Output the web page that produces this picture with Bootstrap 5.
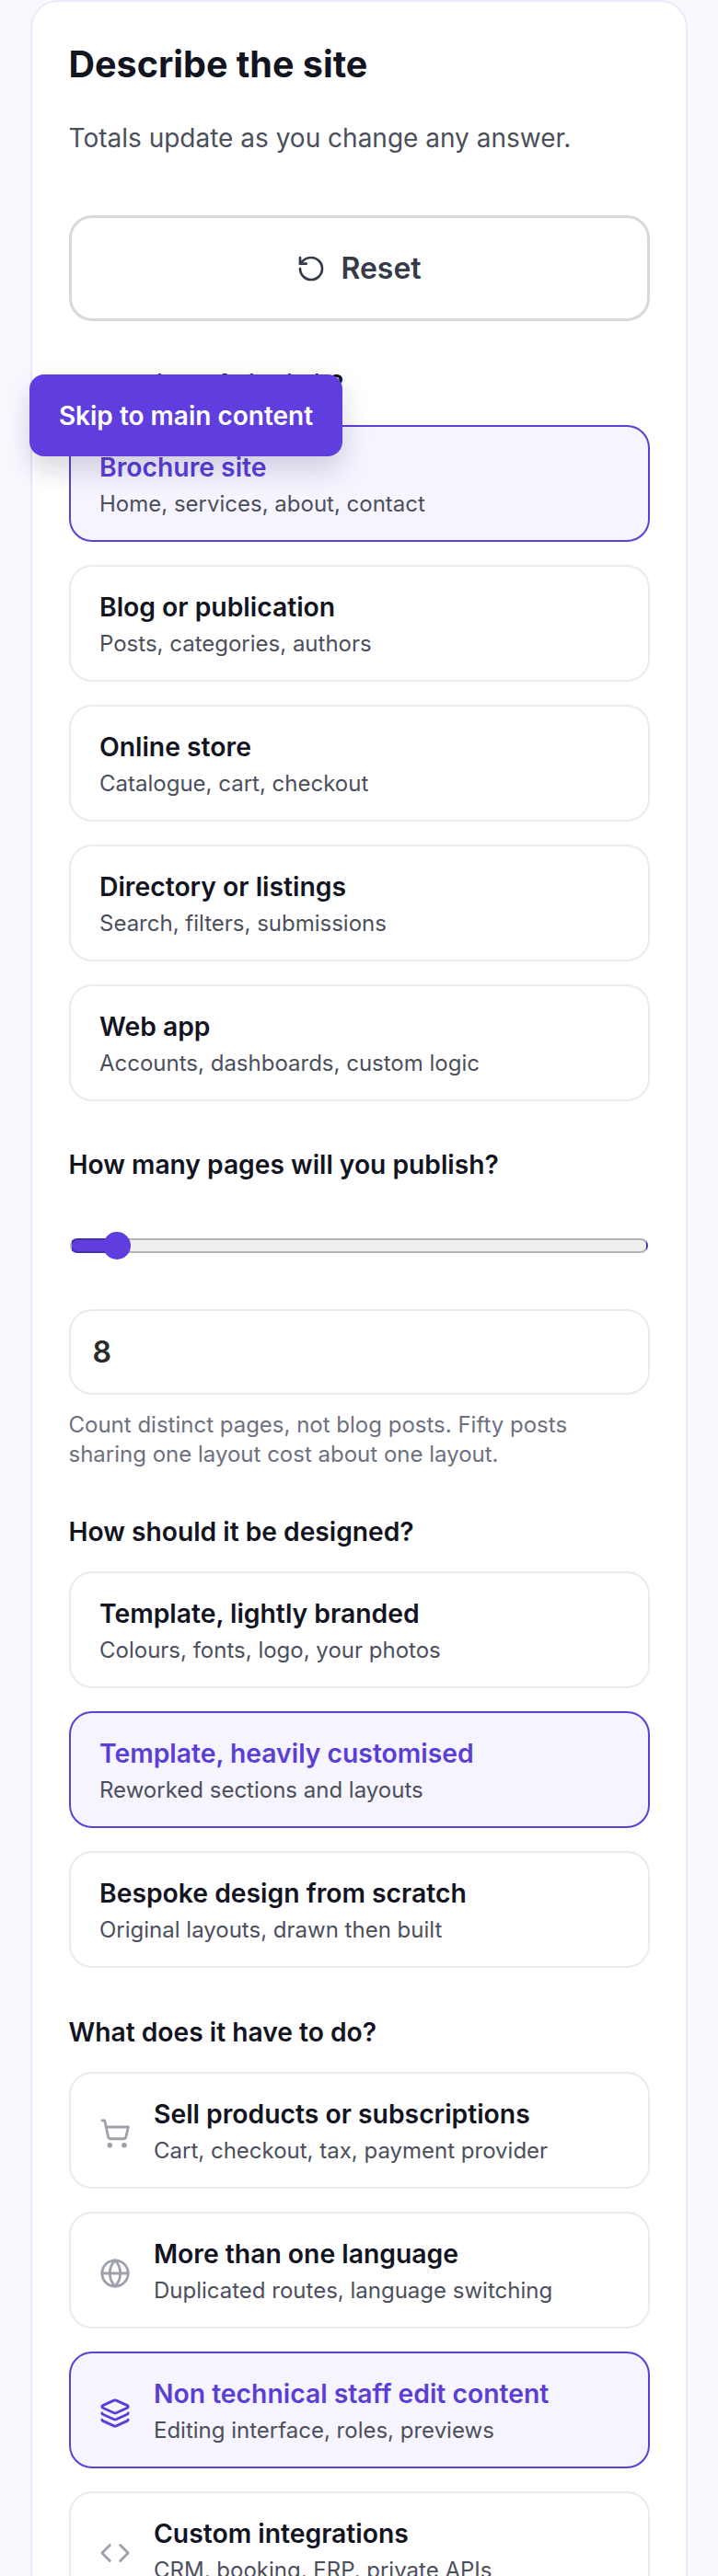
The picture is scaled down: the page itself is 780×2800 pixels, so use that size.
<!DOCTYPE html>
<html lang="en">
<head>
<meta charset="utf-8">
<title>Describe the site</title>
<link rel="stylesheet" href="https://cdn.jsdelivr.net/npm/bootstrap@5.3.0/dist/css/bootstrap.min.css">
<style>
html,body{height:2800px;overflow:hidden}
body{background:#faf8ff;font-family:"Inter",sans-serif;color:#12141f;position:relative}
.skip-lnk{position:absolute;left:32px;top:407px;width:340px;height:89px;border-radius:16px;background:#5f3dde;color:#fff;font-weight:600;font-size:28px;text-decoration:none;box-shadow:0 14px 30px rgba(30,20,80,.18);z-index:5}
.panel{margin:0 33px;height:3400px;background:#fff;border:2px solid #ebe8fb;border-radius:30px;padding:0 39.5px;overflow:hidden}
.panel-title{font-size:39.5px;font-weight:700;line-height:48px;margin:44px 0 0;color:#12141f}
.panel-sub{font-size:28px;line-height:44px;color:#4b4f5c;margin:34px 0 0}
.reset-btn{height:115px;border:3px solid #d9d9dc;border-radius:25px;background:#fff;color:#343a4a;font-size:32px;font-weight:600;margin-top:62px}
.reset-btn svg{width:32px;height:32px}
.q-label{font-size:28.2px;font-weight:600;line-height:44px;color:#12141f;margin:0}
.q-first{margin-top:47px}
.q-pages{margin-top:47px}
.q-next{margin-top:46px}
.q-last{margin-top:48px}
.opt{height:127px;border:2px solid #ebebee;border-radius:25px;background:#fff;padding:3px 31.5px 0}
.opt.on{border-color:#5b40d6;background:#f6f4ff}
.opt-name{font-size:28.3px;font-weight:600;line-height:41px;color:#12141f}
.opt.on .opt-name{color:#5b3dd8}
.opt-desc{font-size:24px;line-height:38px;color:#4b4f5c}
.opt-ico{width:34px;height:34px;color:#9ea1ad;flex:none;margin-top:4px}
.opt.on .opt-ico{color:#5b3dd8}
.opt-list{gap:25px;margin-top:21px}
.opt-list.first-list{margin-top:22px}
.row-gap{gap:25px}
.range-wrap{margin-top:51px;padding:0 1.5px}
.pages-range{appearance:none;-webkit-appearance:none;display:block;width:100%;height:30px;margin:0;background:transparent}
.pages-range::-webkit-slider-runnable-track{height:16px;border:2px solid rgba(0,0,0,.25);border-radius:8px;background:linear-gradient(to right,#5f3dde 50px,#efefef 50px);background-clip:border-box}
.pages-range::-webkit-slider-thumb{-webkit-appearance:none;width:30px;height:30px;border-radius:50%;background:#5f3dde;margin-top:-9px}
.num-box{height:93px;border:2px solid #ebebee;border-radius:25px;padding:0 24px;font-size:32px;font-weight:600;color:#2b2b2b;line-height:89px;background:#fff;margin-top:54px}
.help-txt{font-size:24px;line-height:32px;color:#6d7080;margin:17px 0 0}
</style>
</head>
<body>
<a class="skip-lnk d-flex align-items-center justify-content-center" href="#main">Skip to main content</a>
<main id="main" class="panel">
  <h1 class="panel-title">Describe the site</h1>
  <p class="panel-sub">Totals update as you change any answer.</p>
  <button type="button" class="reset-btn w-100 d-flex align-items-center justify-content-center gap-3">
    <svg viewBox="0 0 24 24" fill="none" stroke="currentColor" stroke-width="2" stroke-linecap="round" stroke-linejoin="round"><path d="M3 12a9 9 0 1 0 9-9 9.75 9.75 0 0 0-6.74 2.74L3 8"/><path d="M3 3v5h5"/></svg>
    <span>Reset</span>
  </button>

  <h2 class="q-label q-first">What kind of site is it?</h2>
  <div class="opt-list first-list d-flex flex-column">
    <div class="opt on d-flex flex-column justify-content-center"><div class="opt-name">Brochure site</div><div class="opt-desc">Home, services, about, contact</div></div>
    <div class="opt d-flex flex-column justify-content-center"><div class="opt-name">Blog or publication</div><div class="opt-desc">Posts, categories, authors</div></div>
    <div class="opt d-flex flex-column justify-content-center"><div class="opt-name">Online store</div><div class="opt-desc">Catalogue, cart, checkout</div></div>
    <div class="opt d-flex flex-column justify-content-center"><div class="opt-name">Directory or listings</div><div class="opt-desc">Search, filters, submissions</div></div>
    <div class="opt d-flex flex-column justify-content-center"><div class="opt-name">Web app</div><div class="opt-desc">Accounts, dashboards, custom logic</div></div>
  </div>

  <h2 class="q-label q-pages">How many pages will you publish?</h2>
  <div class="range-wrap"><input class="pages-range" type="range" min="1" max="124" value="8" aria-label="Pages"></div>
  <div class="num-box">8</div>
  <p class="help-txt">Count distinct pages, not blog posts. Fifty posts<br>sharing one layout cost about one layout.</p>

  <h2 class="q-label q-next">How should it be designed?</h2>
  <div class="opt-list d-flex flex-column">
    <div class="opt d-flex flex-column justify-content-center"><div class="opt-name">Template, lightly branded</div><div class="opt-desc">Colours, fonts, logo, your photos</div></div>
    <div class="opt on d-flex flex-column justify-content-center"><div class="opt-name">Template, heavily customised</div><div class="opt-desc">Reworked sections and layouts</div></div>
    <div class="opt d-flex flex-column justify-content-center"><div class="opt-name">Bespoke design from scratch</div><div class="opt-desc">Original layouts, drawn then built</div></div>
  </div>

  <h2 class="q-label q-last">What does it have to do?</h2>
  <div class="opt-list d-flex flex-column">
    <div class="opt d-flex align-items-center row-gap">
      <svg class="opt-ico" viewBox="0 0 24 24" fill="none" stroke="currentColor" stroke-width="2" stroke-linecap="round" stroke-linejoin="round"><circle cx="8" cy="21" r="1"/><circle cx="19" cy="21" r="1"/><path d="M2.05 2.05h2l2.66 12.42a2 2 0 0 0 2 1.58h9.78a2 2 0 0 0 1.95-1.57l1.65-7.43H5.12"/></svg>
      <div><div class="opt-name">Sell products or subscriptions</div><div class="opt-desc">Cart, checkout, tax, payment provider</div></div>
    </div>
    <div class="opt d-flex align-items-center row-gap">
      <svg class="opt-ico" viewBox="0 0 24 24" fill="none" stroke="currentColor" stroke-width="2" stroke-linecap="round" stroke-linejoin="round"><circle cx="12" cy="12" r="10"/><path d="M12 2a14.5 14.5 0 0 0 0 20 14.5 14.5 0 0 0 0-20"/><path d="M2 12h20"/></svg>
      <div><div class="opt-name">More than one language</div><div class="opt-desc">Duplicated routes, language switching</div></div>
    </div>
    <div class="opt on d-flex align-items-center row-gap">
      <svg class="opt-ico" viewBox="0 0 24 24" fill="none" stroke="currentColor" stroke-width="2" stroke-linecap="round" stroke-linejoin="round"><path d="M12.83 2.18a2 2 0 0 0-1.66 0L2.6 6.08a1 1 0 0 0 0 1.83l8.58 3.91a2 2 0 0 0 1.66 0l8.58-3.9a1 1 0 0 0 0-1.83z"/><path d="M2 12a1 1 0 0 0 .58.91l8.6 3.91a2 2 0 0 0 1.65 0l8.58-3.9A1 1 0 0 0 22 12"/><path d="M2 17a1 1 0 0 0 .58.91l8.6 3.91a2 2 0 0 0 1.65 0l8.58-3.9A1 1 0 0 0 22 17"/></svg>
      <div><div class="opt-name">Non technical staff edit content</div><div class="opt-desc">Editing interface, roles, previews</div></div>
    </div>
    <div class="opt d-flex align-items-center row-gap">
      <svg class="opt-ico" viewBox="0 0 24 24" fill="none" stroke="currentColor" stroke-width="2" stroke-linecap="round" stroke-linejoin="round"><path d="m16 18 6-6-6-6"/><path d="m8 6-6 6 6 6"/></svg>
      <div><div class="opt-name">Custom integrations</div><div class="opt-desc">CRM, booking, ERP, private APIs</div></div>
    </div>
  </div>
</main>
<script src="https://cdn.jsdelivr.net/npm/bootstrap@5.3.0/dist/js/bootstrap.bundle.min.js"></script>
</body>
</html>
